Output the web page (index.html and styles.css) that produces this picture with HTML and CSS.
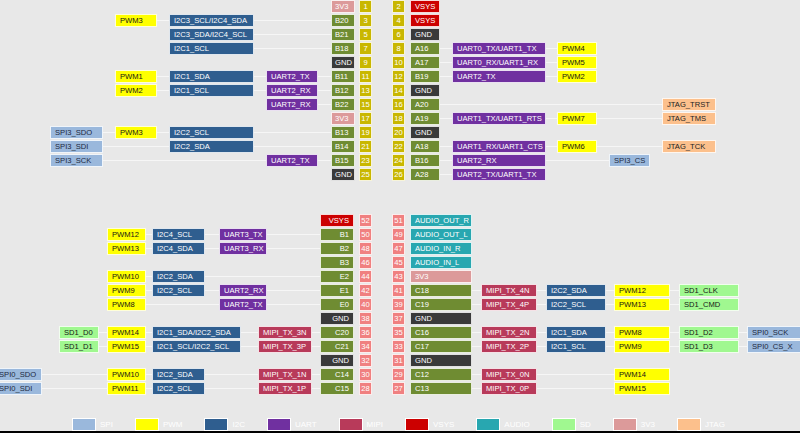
FILE: index.html
```html
<!DOCTYPE html>
<html>
<head>
<meta charset="utf-8">
<link rel="stylesheet" href="styles.css">
</head>
<body>
<div class="page">
  <div class="sec top">
    <div class="row"><span class="b c-pin v33">3V3</span><span class="b num c-num nt">1</span><span class="b num c-rnum nt">2</span><span class="b c-rpin vsys">VSYS</span></div>
    <div class="row"><i class="ln f-pwm"></i><span class="b c-pwm pwm">PWM3</span><span class="b c-i2c i2c">I2C3_SCL/I2C4_SDA</span><span class="b c-pin gpio">B20</span><span class="b num c-num nt">3</span><span class="b num c-rnum nt">4</span><span class="b c-rpin vsys">VSYS</span></div>
    <div class="row"><i class="ln f-i2c"></i><span class="b c-i2c i2c">I2C3_SDA/I2C4_SCL</span><span class="b c-pin gpio">B21</span><span class="b num c-num nt">5</span><span class="b num c-rnum nt">6</span><span class="b c-rpin gnd">GND</span></div>
    <div class="row"><i class="ln f-i2c"></i><span class="b c-i2c i2c">I2C1_SCL</span><span class="b c-pin gpio">B18</span><span class="b num c-num nt">7</span><span class="b num c-rnum nt">8</span><span class="b c-rpin gpio">A16</span><i class="ln t-rpwm"></i><span class="b c-ruart uart">UART0_TX/UART1_TX</span><span class="b c-rpwm pwm">PWM4</span></div>
    <div class="row"><span class="b c-pin gnd">GND</span><span class="b num c-num nt">9</span><span class="b num c-rnum nt">10</span><span class="b c-rpin gpio">A17</span><i class="ln t-rpwm"></i><span class="b c-ruart uart">UART0_RX/UART1_RX</span><span class="b c-rpwm pwm">PWM5</span></div>
    <div class="row"><i class="ln f-pwm"></i><span class="b c-pwm pwm">PWM1</span><span class="b c-i2c i2c">I2C1_SDA</span><span class="b c-uart uart">UART2_TX</span><span class="b c-pin gpio">B11</span><span class="b num c-num nt">11</span><span class="b num c-rnum nt">12</span><span class="b c-rpin gpio">B19</span><i class="ln t-rpwm"></i><span class="b c-ruart uart">UART2_TX</span><span class="b c-rpwm pwm">PWM2</span></div>
    <div class="row"><i class="ln f-pwm"></i><span class="b c-pwm pwm">PWM2</span><span class="b c-i2c i2c">I2C1_SCL</span><span class="b c-uart uart">UART2_RX</span><span class="b c-pin gpio">B12</span><span class="b num c-num nt">13</span><span class="b num c-rnum nt">14</span><span class="b c-rpin gnd">GND</span></div>
    <div class="row"><i class="ln f-uart"></i><span class="b c-uart uart">UART2_RX</span><span class="b c-pin gpio">B22</span><span class="b num c-num nt">15</span><span class="b num c-rnum nt">16</span><span class="b c-rpin gpio">A20</span><i class="ln t-jtag"></i><span class="b c-jtag jtag">JTAG_TRST</span></div>
    <div class="row"><span class="b c-pin v33">3V3</span><span class="b num c-num nt">17</span><span class="b num c-rnum nt">18</span><span class="b c-rpin gpio">A19</span><i class="ln t-jtag"></i><span class="b c-ruart uart">UART1_TX/UART1_RTS</span><span class="b c-rpwm pwm">PWM7</span><span class="b c-jtag jtag">JTAG_TMS</span></div>
    <div class="row"><i class="ln f-spi"></i><span class="b c-spi spi">SPI3_SDO</span><span class="b c-pwm pwm">PWM3</span><span class="b c-i2c i2c">I2C2_SCL</span><span class="b c-pin gpio">B13</span><span class="b num c-num nt">19</span><span class="b num c-rnum nt">20</span><span class="b c-rpin gnd">GND</span></div>
    <div class="row"><i class="ln f-spi"></i><span class="b c-spi spi">SPI3_SDI</span><span class="b c-i2c i2c">I2C2_SDA</span><span class="b c-pin gpio">B14</span><span class="b num c-num nt">21</span><span class="b num c-rnum nt">22</span><span class="b c-rpin gpio">A18</span><i class="ln t-jtag"></i><span class="b c-ruart uart">UART1_RX/UART1_CTS</span><span class="b c-rpwm pwm">PWM6</span><span class="b c-jtag jtag">JTAG_TCK</span></div>
    <div class="row"><i class="ln f-spi"></i><span class="b c-spi spi">SPI3_SCK</span><span class="b c-uart uart">UART2_TX</span><span class="b c-pin gpio">B15</span><span class="b num c-num nt">23</span><span class="b num c-rnum nt">24</span><span class="b c-rpin gpio">B16</span><i class="ln t-rspi"></i><span class="b c-ruart uart">UART2_RX</span><span class="b c-rspi spi">SPI3_CS</span></div>
    <div class="row"><span class="b c-pin gnd">GND</span><span class="b num c-num nt">25</span><span class="b num c-rnum nt">26</span><span class="b c-rpin gpio">A28</span><i class="ln t-ruart"></i><span class="b c-ruart uart">UART2_TX/UART1_TX</span></div>
  </div>

  <div class="sec bottom">
    <div class="row"><span class="b c-pin vsys ra">VSYS</span><span class="b num c-num nb">52</span><span class="b num c-rnum nb">51</span><span class="b c-rpin audio">AUDIO_OUT_R</span></div>
    <div class="row"><i class="ln f-pwm"></i><span class="b c-pwm pwm">PWM12</span><span class="b c-i2c i2c">I2C4_SCL</span><span class="b c-uart uart">UART3_TX</span><span class="b c-pin gpio ra">B1</span><span class="b num c-num nb">50</span><span class="b num c-rnum nb">49</span><span class="b c-rpin audio">AUDIO_OUT_L</span></div>
    <div class="row"><i class="ln f-pwm"></i><span class="b c-pwm pwm">PWM13</span><span class="b c-i2c i2c">I2C4_SDA</span><span class="b c-uart uart">UART3_RX</span><span class="b c-pin gpio ra">B2</span><span class="b num c-num nb">48</span><span class="b num c-rnum nb">47</span><span class="b c-rpin audio">AUDIO_IN_R</span></div>
    <div class="row"><span class="b c-pin gpio ra">B3</span><span class="b num c-num nb">46</span><span class="b num c-rnum nb">45</span><span class="b c-rpin audio">AUDIO_IN_L</span></div>
    <div class="row"><i class="ln f-pwm"></i><span class="b c-pwm pwm">PWM10</span><span class="b c-i2c i2c">I2C2_SDA</span><span class="b c-pin gpio ra">E2</span><span class="b num c-num nb">44</span><span class="b num c-rnum nb">43</span><span class="b c-rpin v33">3V3</span></div>
    <div class="row"><i class="ln f-pwm"></i><span class="b c-pwm pwm">PWM9</span><span class="b c-i2c i2c">I2C2_SCL</span><span class="b c-uart uart">UART2_RX</span><span class="b c-pin gpio ra">E1</span><span class="b num c-num nb">42</span><span class="b num c-rnum nb">41</span><span class="b c-rpin gpio">C18</span><i class="ln t-rsd"></i><span class="b c-rmipi mipi">MIPI_TX_4N</span><span class="b c-ri2c i2c">I2C2_SDA</span><span class="b c-rpwm pwm">PWM12</span><span class="b c-rsd sd">SD1_CLK</span></div>
    <div class="row"><i class="ln f-pwm"></i><span class="b c-pwm pwm">PWM8</span><span class="b c-uart uart">UART2_TX</span><span class="b c-pin gpio ra">E0</span><span class="b num c-num nb">40</span><span class="b num c-rnum nb">39</span><span class="b c-rpin gpio">C19</span><i class="ln t-rsd"></i><span class="b c-rmipi mipi">MIPI_TX_4P</span><span class="b c-ri2c i2c">I2C2_SCL</span><span class="b c-rpwm pwm">PWM13</span><span class="b c-rsd sd">SD1_CMD</span></div>
    <div class="row"><span class="b c-pin gnd ra">GND</span><span class="b num c-num nb">38</span><span class="b num c-rnum nb">37</span><span class="b c-rpin gnd">GND</span></div>
    <div class="row"><i class="ln f-sd"></i><span class="b c-sd sd">SD1_D0</span><span class="b c-pwm pwm">PWM14</span><span class="b c-i2cw i2c">I2C1_SDA/I2C2_SDA</span><span class="b c-mipi mipi">MIPI_TX_3N</span><span class="b c-pin gpio ra">C20</span><span class="b num c-num nb">36</span><span class="b num c-rnum nb">35</span><span class="b c-rpin gpio">C16</span><i class="ln t-rspi"></i><span class="b c-rmipi mipi">MIPI_TX_2N</span><span class="b c-ri2c i2c">I2C1_SDA</span><span class="b c-rpwm pwm">PWM8</span><span class="b c-rsd sd">SD1_D2</span><span class="b c-rspi spi">SPI0_SCK</span></div>
    <div class="row"><i class="ln f-sd"></i><span class="b c-sd sd">SD1_D1</span><span class="b c-pwm pwm">PWM15</span><span class="b c-i2cw i2c">I2C1_SCL/I2C2_SCL</span><span class="b c-mipi mipi">MIPI_TX_3P</span><span class="b c-pin gpio ra">C21</span><span class="b num c-num nb">34</span><span class="b num c-rnum nb">33</span><span class="b c-rpin gpio">C17</span><i class="ln t-rspi"></i><span class="b c-rmipi mipi">MIPI_TX_2P</span><span class="b c-ri2c i2c">I2C1_SCL</span><span class="b c-rpwm pwm">PWM9</span><span class="b c-rsd sd">SD1_D3</span><span class="b c-rspi spi">SPI0_CS_X</span></div>
    <div class="row"><span class="b c-pin gnd ra">GND</span><span class="b num c-num nb">32</span><span class="b num c-rnum nb">31</span><span class="b c-rpin gnd">GND</span></div>
    <div class="row"><i class="ln f-spi"></i><span class="b c-spi spi">SPI0_SDO</span><span class="b c-pwm pwm">PWM10</span><span class="b c-i2c i2c">I2C2_SDA</span><span class="b c-mipi mipi">MIPI_TX_1N</span><span class="b c-pin gpio ra">C14</span><span class="b num c-num nb">30</span><span class="b num c-rnum nb">29</span><span class="b c-rpin gpio">C12</span><i class="ln t-rpwm"></i><span class="b c-rmipi mipi">MIPI_TX_0N</span><span class="b c-rpwm pwm">PWM14</span></div>
    <div class="row"><i class="ln f-spi"></i><span class="b c-spi spi">SPI0_SDI</span><span class="b c-pwm pwm">PWM11</span><span class="b c-i2c i2c">I2C2_SCL</span><span class="b c-mipi mipi">MIPI_TX_1P</span><span class="b c-pin gpio ra">C15</span><span class="b num c-num nb">28</span><span class="b num c-rnum nb">27</span><span class="b c-rpin gpio">C13</span><i class="ln t-rpwm"></i><span class="b c-rmipi mipi">MIPI_TX_0P</span><span class="b c-rpwm pwm">PWM15</span></div>
  </div>

  <div class="legend">
    <div class="key"><span class="sw spi"></span><span>SPI</span></div>
    <div class="key"><span class="sw pwm"></span><span>PWM</span></div>
    <div class="key"><span class="sw i2c"></span><span>I2C</span></div>
    <div class="key"><span class="sw uart"></span><span>UART</span></div>
    <div class="key"><span class="sw mipi"></span><span>MIPI</span></div>
    <div class="key"><span class="sw vsys"></span><span>VSYS</span></div>
    <div class="key"><span class="sw audio"></span><span>AUDIO</span></div>
    <div class="key"><span class="sw sd"></span><span>SD</span></div>
    <div class="key"><span class="sw v33"></span><span>3V3</span></div>
    <div class="key"><span class="sw jtag"></span><span>JTAG</span></div>
  </div>
  <div class="bar"></div>
</div>
</body>
</html>
```

FILE: styles.css
```css
html, body {
  margin: 0;
  padding: 0;
  width: 800px;
  height: 433px;
  overflow: hidden;
  background: #e8e8e8;
}
body {
  font-family: "Liberation Sans", Arial, sans-serif;
  font-size: 7.6px;
}
.page {
  display: flex;
  flex-direction: column;
  height: 433px;
}
.sec {
  display: flex;
  flex-direction: column;
}
.row {
  display: grid;
  grid-template-rows: 14px;
}
.top .row {
  grid-template-columns: 50px [spi-s] 53px [spi-e] 12px [pwm-s] 42px [pwm-e] 12px [i2c-s] 85px [i2c-e] 12px [uart-s] 52px [uart-e] 13px [pin-s] 24px [pin-e] 4px [num-s] 13px [num-e] 20px [rnum-s] 13px [rnum-e] 5px [rpin-s] 30px [rpin-e] 12px [ruart-s] 94px [ruart-e] 11px [rpwm-s] 40px [rpwm-e] 12px [rspi-s] 41px [rspi-e] 12px [jtag-s] 54px [jtag-e];
}
.bottom {
  margin-top: 32px;
  margin-left: -6px;
}
.bottom .row {
  grid-template-columns: [spi-s] 48px [spi-e] 17px [sd-s] 40px [sd-e] 8px [pwm-s] 39px [pwm-e] 6px [i2c-s] 53px [i2c-e] 14px [uart-s] 22px [i2cw-e] 17px [mipi-s] 9px [uart-e] 45px [mipi-e] 8px [pin-s] 34px [pin-e] 5px [num-s] 13px [num-e] 20px [rnum-s] 13px [rnum-e] 5px [rpin-s] 62px [rpin-e] 9px [rmipi-s] 56px [rmipi-e] 9px [ri2c-s] 60px [ri2c-e] 8px [rpwm-s] 56px [rpwm-e] 9px [rsd-s] 60px [rsd-e] 8px [rspi-s] 60px [rspi-e];
}

/* boxes */
.b {
  grid-row: 1;
  align-self: start;
  box-sizing: border-box;
  height: 13px;
  border: 1px solid rgba(255, 255, 255, 0.85);
  padding: 0 4px;
  line-height: 11px;
  white-space: nowrap;
  overflow: hidden;
  color: #fff;
}
.top .c-pin { padding: 0 3px; }
.num { text-align: center; padding: 0; }
.ra { text-align: right; }

/* connector lines */
.ln {
  grid-row: 1;
  align-self: start;
  margin-top: 6px;
  height: 1px;
  background: #f6f6f6;
}
.f-spi { grid-column: spi-s / pin-s; }
.f-sd { grid-column: sd-s / pin-s; }
.f-pwm { grid-column: pwm-s / pin-s; }
.f-i2c { grid-column: i2c-s / pin-s; }
.f-uart { grid-column: uart-s / pin-s; }
.t-ruart { grid-column: rpin-e / ruart-e; }
.t-rmipi { grid-column: rpin-e / rmipi-e; }
.t-ri2c { grid-column: rpin-e / ri2c-e; }
.t-rpwm { grid-column: rpin-e / rpwm-e; }
.t-rsd { grid-column: rpin-e / rsd-e; }
.t-rspi { grid-column: rpin-e / rspi-e; }
.t-jtag { grid-column: rpin-e / jtag-e; }

/* column placement */
.c-spi { grid-column: spi-s / spi-e; }
.c-sd { grid-column: sd-s / sd-e; }
.c-pwm { grid-column: pwm-s / pwm-e; }
.c-i2c { grid-column: i2c-s / i2c-e; }
.c-i2cw { grid-column: i2c-s / i2cw-e; }
.c-uart { grid-column: uart-s / uart-e; }
.c-mipi { grid-column: mipi-s / mipi-e; }
.c-pin { grid-column: pin-s / pin-e; }
.c-num { grid-column: num-s / num-e; }
.c-rnum { grid-column: rnum-s / rnum-e; }
.c-rpin { grid-column: rpin-s / rpin-e; }
.c-rmipi { grid-column: rmipi-s / rmipi-e; }
.c-ri2c { grid-column: ri2c-s / ri2c-e; }
.c-ruart { grid-column: ruart-s / ruart-e; }
.c-rpwm { grid-column: rpwm-s / rpwm-e; }
.c-rsd { grid-column: rsd-s / rsd-e; }
.c-rspi { grid-column: rspi-s / rspi-e; }
.c-jtag { grid-column: jtag-s / jtag-e; }

/* colours */
.spi { background: #9ab8dc; color: #1d2940; }
.pwm { background: #ffff00; color: #151515; }
.i2c { background: #2f5e8f; }
.uart { background: #7030a0; }
.mipi { background: #b83a5a; }
.vsys { background: #cc0000; }
.audio { background: #28a7b0; }
.sd { background: #a0f890; color: #151515; }
.v33 { background: #dc9a9a; }
.jtag { background: #fcc08c; color: #222; }
.gpio { background: #6f8c32; }
.gnd { background: #3a3a3a; }
.nt { background: #c9b700; }
.nb { background: #f08080; }

/* legend */
.legend {
  margin-top: 22px;
  padding-left: 72px;
  height: 13px;
  display: flex;
  gap: 22px;
}
.key {
  display: flex;
  align-items: center;
  gap: 4px;
  color: #fff;
  font-size: 8px;
}
.sw {
  box-sizing: border-box;
  width: 24px;
  height: 13px;
  border: 1px solid #fff;
}
.bar {
  margin-top: auto;
  height: 2px;
  background: #000;
}
```
